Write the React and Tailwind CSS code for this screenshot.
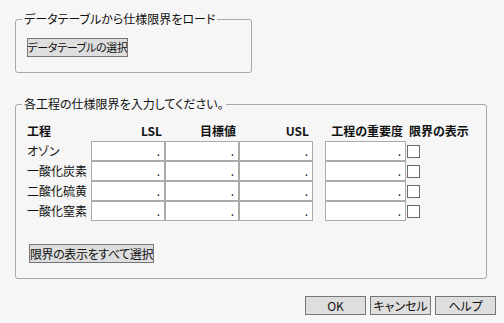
import React from "react";

const rows = ["オゾン", "一酸化炭素", "二酸化硫黄", "一酸化窒素"];

const Cell = ({ w }) => (
  <div
    className={`${w} h-[20px] border border-[#ababab] bg-white flex items-end justify-end pr-[4px] pb-[1px] text-[12px] leading-[16px] text-[#222]`}
  >
    .
  </div>
);

const Btn = ({ children, className = "" }) => (
  <button
    className={`h-[19px] px-0 bg-[#dedede] border border-[#767676] leading-[15px] text-[#111] flex items-center justify-center whitespace-nowrap overflow-hidden ${className}`}
  >
    {children}
  </button>
);

export default function App() {
  return (
    <div
      className="w-[504px] h-[323px] bg-[#f6f6f6] text-[#111] text-[12px] leading-[16px] overflow-hidden flex flex-col [font-feature-settings:'palt'] antialiased"
      style={{ fontFamily: '"Noto Sans CJK JP", "Noto Sans", sans-serif' }}
    >
      {/* データテーブルから仕様限界をロード */}
      <fieldset className="ml-[15px] mt-[11px] w-[237px] h-[62px] border border-[#a8a8a8] rounded-[3px] px-[11px] pb-0 pt-0 min-w-0">
        <legend className="ml-[-5px] px-[2px] text-[12px] leading-[16px]">
          データテーブルから仕様限界をロード
        </legend>
        <Btn className="w-[101px] mt-[11px] text-[11px] tracking-[-0.3px]">データテーブルの選択</Btn>
      </fieldset>

      {/* 各工程の仕様限界を入力してください。 */}
      <fieldset className="ml-[15px] mt-[23px] w-[472px] h-[183px] border border-[#a8a8a8] rounded-[3px] px-[11px] pt-0 pb-0 min-w-0">
        <legend className="ml-[-5px] px-[2px] text-[12px] leading-[16px]">
          各工程の仕様限界を入力してください。
        </legend>

        <div className="mt-[11px] grid grid-cols-[64px_74px_74px_74px_12px_81px_auto] font-bold text-[12px] leading-[16px] h-[16px] mb-[2px]">
          <div>工程</div>
          <div className="text-right pr-[3px]">LSL</div>
          <div className="text-right pr-[3px]">目標値</div>
          <div className="text-right pr-[4px]">USL</div>
          <div />
          <div className="text-right pr-[3px] whitespace-nowrap">工程の重要度</div>
          <div className="pl-[3px] whitespace-nowrap">限界の表示</div>
        </div>

        <div className="flex flex-col">
          {rows.map((r) => (
            <div key={r} className="flex items-center h-[20px]">
              <div className="w-[64px] whitespace-nowrap">{r}</div>
              <Cell w="w-[74px]" />
              <Cell w="w-[74px]" />
              <Cell w="w-[74px]" />
              <div className="w-[12px]" />
              <Cell w="w-[81px]" />
              <div className="ml-[1px] w-[13px] h-[13px] border border-[#6a6a6a] bg-white" />
            </div>
          ))}
        </div>

        <Btn className="w-[125px] mt-[23px] ml-[2px] text-[12px] tracking-[-0.4px]">限界の表示をすべて選択</Btn>
      </fieldset>

      <div className="flex justify-end gap-[4px] pr-[8px] mt-[17px]">
        <Btn className="w-[61px] text-[12px]">OK</Btn>
        <Btn className="w-[61px] text-[12px]">キャンセル</Btn>
        <Btn className="w-[61px] text-[12px]">ヘルプ</Btn>
      </div>
    </div>
  );
}
